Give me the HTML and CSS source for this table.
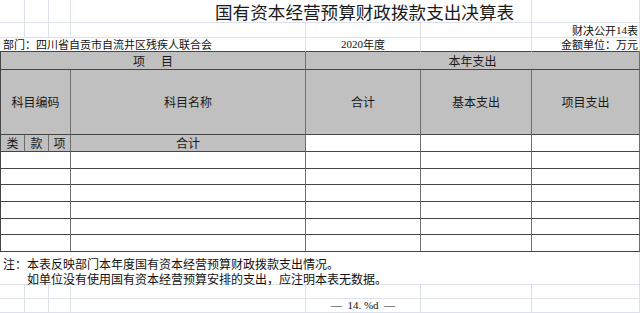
FILE: index.html
```html
<!DOCTYPE html>
<html lang="zh-CN">
<head>
<meta charset="utf-8">
<title>国有资本经营预算财政拨款支出决算表</title>
<link rel="stylesheet" href="styles.css">
</head>
<body>
<div class="sheet">
  <!-- row 1: title -->
  <div class="c"></div><div class="c"></div><div class="c"></div>
  <div class="c s3 title">国有资本经营预算财政拨款支出决算表</div>
  <div class="c"></div>
  <!-- row 2 -->
  <div class="c"></div><div class="c"></div><div class="c"></div><div class="c"></div><div class="c"></div><div class="c"></div>
  <div class="c right small">财决公开<span class="num">14</span>表</div>
  <!-- row 3 -->
  <div class="c s4 tb left small">部门：四川省自贡市自流井区残疾人联合会</div>
  <div class="c tb center small"><span class="num">2020</span>年度</div>
  <div class="c tb"></div>
  <div class="c tb right small">金额单位：万元</div>
  <!-- row 4 -->
  <div class="t g s4 l center">项&nbsp;&nbsp;&nbsp;&nbsp;&nbsp;&nbsp;目</div>
  <div class="t g s3 center">本年支出</div>
  <!-- row 5 -->
  <div class="t g s3 l center">科目编码</div>
  <div class="t g center">科目名称</div>
  <div class="t g center">合计</div>
  <div class="t g center">基本支出</div>
  <div class="t g center">项目支出</div>
  <!-- row 6 -->
  <div class="t g l center">类</div>
  <div class="t g center">款</div>
  <div class="t g center">项</div>
  <div class="t g center">合计</div>
  <div class="t"></div><div class="t"></div><div class="t"></div>
  <!-- data rows -->
  <div class="t s3 l"></div><div class="t"></div><div class="t"></div><div class="t"></div><div class="t"></div>
  <div class="t s3 l"></div><div class="t"></div><div class="t"></div><div class="t"></div><div class="t"></div>
  <div class="t s3 l"></div><div class="t"></div><div class="t"></div><div class="t"></div><div class="t"></div>
  <div class="t s3 l"></div><div class="t"></div><div class="t"></div><div class="t"></div><div class="t"></div>
  <div class="t s3 l"></div><div class="t"></div><div class="t"></div><div class="t"></div><div class="t"></div>
  <div class="t s3 l"></div><div class="t"></div><div class="t"></div><div class="t"></div><div class="t"></div>
  <!-- note -->
  <div class="c s7 note">
    <p>注：本表反映部门本年度国有资本经营预算财政拨款支出情况。</p>
    <p class="indent">如单位没有使用国有资本经营预算安排的支出，应注明本表无数据。</p>
  </div>
  <!-- trailing rows -->
  <div class="c"></div><div class="c"></div><div class="c"></div><div class="c"></div><div class="c"></div><div class="c"></div><div class="c"></div>
  <div class="c"></div><div class="c"></div><div class="c"></div><div class="c"></div>
  <div class="c center small"><span class="num">—&nbsp;&nbsp;14. %d&nbsp;&nbsp;—</span></div>
  <div class="c"></div><div class="c"></div>
</div>
</body>
</html>
```
FILE: styles.css
```css
html, body {
  margin: 0;
  padding: 0;
  background: #ffffff;
}
body {
  font-family: "Noto Sans CJK SC", "Noto Sans", sans-serif;
  font-size: 12px;
  color: #111;
}
.sheet {
  display: grid;
  width: 640px;
  grid-template-columns: 25px 24px 22px 235px 115px 111px 108px;
  grid-template-rows: 23px 15px 14px 18px 65px 17px 17px 16px 17px 17px 16px 17px 33px 14px 14px;
}
.sheet > div {
  box-sizing: border-box;
  min-width: 0;
  white-space: nowrap;
  line-height: 12px;
}
.c {
  border-right: 1px solid #dde1ea;
  border-bottom: 1px solid #dde1ea;
}
.t {
  border-right: 1px solid #6e6e6e;
  border-bottom: 1px solid #454545;
}
.tb { border-bottom: 1px solid #454545; }
.l { border-left: 1px solid #454545; }
.g { background: #c0c0c0; color: #1a1a1a; }
.s3 { grid-column: span 3; }
.s4 { grid-column: span 4; }
.s7 { grid-column: span 7; }
.small {
  font-size: 11px;
  line-height: 11px;
}
.sheet > .small { line-height: 11px; }
.center {
  display: flex;
  align-items: center;
  justify-content: center;
}
.left {
  display: flex;
  align-items: center;
  padding-left: 3px;
}
.right {
  display: flex;
  align-items: center;
  justify-content: flex-end;
  padding-right: 1px;
}
.title {
  display: flex;
  align-items: center;
  padding-left: 144px;
  padding-top: 2px;
  font-size: 17.6px;
  color: #1a1a1a;
}
.sheet > .title { line-height: 18px; }
.num {
  font-family: "Liberation Serif", "Noto Sans CJK SC", serif;
}
.note {
  padding: 4px 0 0 3px;
}
.note p {
  margin: 0;
  height: 15px;
  line-height: 15px;
}
.note .indent {
  padding-left: 24px;
}
```
